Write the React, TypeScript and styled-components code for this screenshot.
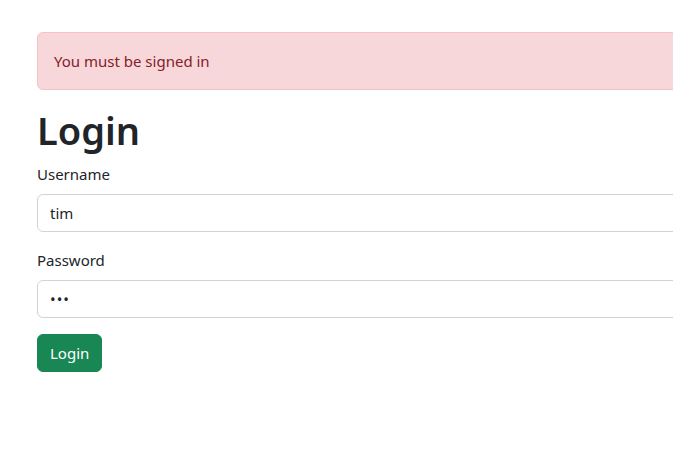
import * as React from 'react';
import styled, { createGlobalStyle } from 'styled-components';

const GlobalStyle = createGlobalStyle`
  html, body {
    margin: 0;
    overflow: hidden;
    background: #fff;
  }
  body {
    font-family: "Noto Sans", "Open Sans", sans-serif;
    font-size: 15px;
    line-height: 24px;
    color: #212529;
  }
  * { box-sizing: border-box; }
`;

const Page = styled.div`
  padding: 32px 0 0 37px;
`;
const Container = styled.div`
  width: 1100px;
`;
const Alert = styled.div`
  padding: 16px;
  margin-bottom: 16px;
  color: #842029;
  background-color: #f8d7da;
  border: 1px solid #f5c2c7;
  border-radius: 6px;
`;
const Title = styled.h1`
  margin: 0 0 8px;
  font-size: 38px;
  font-weight: 600;
  line-height: 48px;
`;
const Field = styled.div`
  margin-bottom: 16px;
`;
const Label = styled.label`
  display: block;
  margin-bottom: 8px;
`;
const Input = styled.input`
  display: block;
  width: 100%;
  height: 38px;
  padding: 6px 12px;
  font: inherit;
  color: #212529;
  background: #fff;
  border: 1px solid #ced4da;
  border-radius: 6px;
  outline: none;

  &[type='password'] {
    letter-spacing: 1px;
  }
`;
const Button = styled.button`
  display: inline-block;
  height: 38px;
  padding: 6px 12px;
  font: inherit;
  color: #fff;
  background-color: #198754;
  border: 1px solid #198754;
  border-radius: 6px;
`;

const App: React.FC = (): React.ReactElement => {
  const [username, setUsername] = React.useState('tim');
  const [password, setPassword] = React.useState('abc');

  return (
    <Page>
      <GlobalStyle />
      <Container>
        <Alert>You must be signed in</Alert>
        <Title>Login</Title>
        <form onSubmit={(e) => e.preventDefault()}>
          <Field>
            <Label htmlFor="username">Username</Label>
            <Input id="username" value={username} onChange={(e) => setUsername(e.target.value)} />
          </Field>
          <Field>
            <Label htmlFor="password">Password</Label>
            <Input id="password" type="password" value={password} onChange={(e) => setPassword(e.target.value)} />
          </Field>
          <Button type="submit">Login</Button>
        </form>
      </Container>
    </Page>
  );
};

export default App;
